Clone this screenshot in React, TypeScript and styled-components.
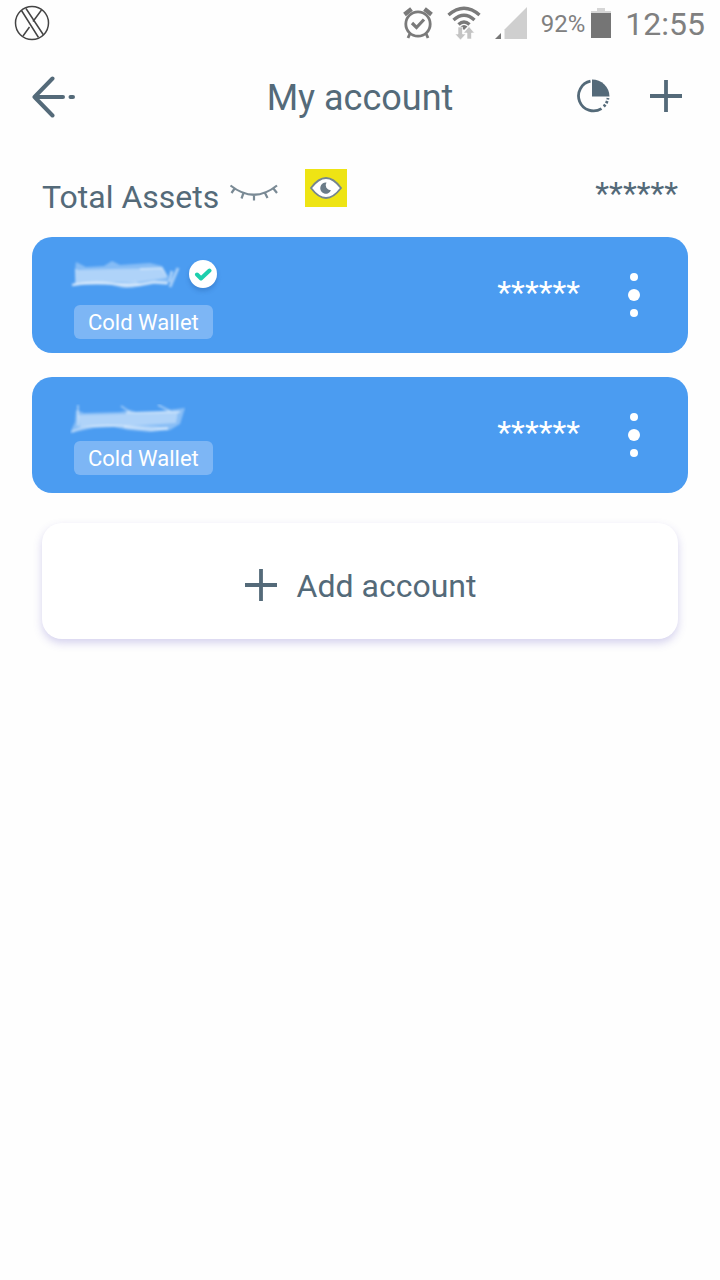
import React, { useState } from 'react';
import styled, { createGlobalStyle } from 'styled-components';

interface Account {
  id: string;
  verified: boolean;
  type: string;
  balance: string;
}

const accounts: Account[] = [
  { id: 'first', verified: true, type: 'Cold Wallet', balance: '******' },
  { id: 'second', verified: false, type: 'Cold Wallet', balance: '******' },
];

const XLogo = () => (
  <svg width="36" height="36" viewBox="0 0 36 36" fill="none" stroke="#444" strokeWidth="1.5">
    <circle cx="18" cy="18" r="16.5" />
    <path d="M7.5 5.5 L24.5 32.5 M12 3.5 L29.5 30 M27.5 5 L19 16.5 M9 31 L15.5 22" />
  </svg>
);

const AlarmIcon = () => (
  <svg width="30" height="32" viewBox="0 0 30 32" fill="none" stroke="#7a7a7a" strokeWidth="2.8">
    <circle cx="15" cy="17" r="12.2" />
    <path d="M1.5 7.5 L8.5 2 M28.5 7.5 L21.5 2" strokeWidth="4.4" />
    <path d="M9 16 L13.5 20.5 L21 12.5" strokeWidth="3.2" />
    <path d="M7 26.5 L5 31 M23 26.5 L25 31" />
  </svg>
);

const WifiIcon = () => (
  <svg width="34" height="34" viewBox="0 0 34 34" fill="none">
    <g stroke="#7a7a7a" strokeWidth="3.4">
      <path d="M1.5 9 Q17 -4.5 32.5 9" />
      <path d="M6.5 14 Q17 4.5 27.5 14" />
      <path d="M11.5 18.5 Q17 13.5 22.5 18.5" />
    </g>
    <path d="M13.5 20.5 Q17 17.5 20.5 20.5 L17 24 Z" fill="#7a7a7a" />
    <path
      d="M11 21 H15.5 V28 H19 L13.5 34 L8 28 H11 Z M20 33 V27 H16.5 L22 20.5 L27.5 27 H24.5 V33 Z"
      fill="#c4c4c4"
      stroke="#fff"
      strokeWidth="0.6"
    />
  </svg>
);

const SignalIcon = () => (
  <svg width="32" height="32" viewBox="0 0 32 32">
    <path d="M9.5 22.5 L32 0 V32 H9.5 Z" fill="#cfcfcf" />
    <path d="M0 32 L6 26 V32 Z" fill="#777" />
  </svg>
);

const BatteryIcon = () => (
  <svg width="20" height="30" viewBox="0 0 20 30">
    <path d="M6 0 H14 V3 H20 V6 H0 V3 H6 Z" fill="#d6d6d6" />
    <path d="M0 5 H20 V30 H0 Z" fill="#757575" />
  </svg>
);

const BackIcon = () => (
  <svg width="44" height="42" viewBox="0 0 44 42" fill="none" stroke="#546a79" strokeWidth="4" strokeLinecap="round" strokeLinejoin="round">
    <path d="M20.5 2.5 L2.5 21 L20.5 39.5 M2.5 21 H31 M38.5 21 H41" />
  </svg>
);

const ChartIcon = () => (
  <svg width="34" height="34" viewBox="0 0 34 34" fill="none" stroke="#546a79" strokeWidth="2.8">
    <path d="M14.5 2.2 A15 15 0 1 0 25.5 29.6" />
    <path d="M27.8 27.4 A15 15 0 0 0 32 19" strokeDasharray="2.4 1.6" />
    <path d="M16 0.5 A17.5 17 0 0 1 33.5 17.5 H16 Z" fill="#546a79" stroke="none" />
  </svg>
);

const PlusIcon = () => (
  <svg width="34" height="34" viewBox="0 0 34 34" stroke="#546a79" strokeWidth="3.8">
    <path d="M17 1 V33 M1 17 H33" />
  </svg>
);

const ClosedEyeIcon = () => (
  <svg width="50" height="20" viewBox="0 0 50 20" fill="none" stroke="#7a8a95" strokeWidth="2.2">
    <path d="M1.5 2.5 Q25 21 48 2.5 M6 5 L2.5 10 M14.5 10 L12.5 15.5 M25 12 V17.5 M36 10 L38.5 15 M44 5 L48 10" />
  </svg>
);

const OpenEyeIcon = () => (
  <svg width="32" height="22" viewBox="0 0 32 22">
    <path d="M1 11 Q16 -9 31 11 Q16 31 1 11 Z" fill="#fff" stroke="#75868f" strokeWidth="1.8" />
    <path d="M16.5 5.5 A5.6 5.6 0 1 0 21 13.2 A5 5 0 0 1 16.5 5.5 Z" fill="#6b7c88" />
  </svg>
);

const CheckIcon = () => (
  <svg width="18" height="14" viewBox="0 0 18 14" fill="none" stroke="#1dcfad" strokeWidth="4" strokeLinecap="round" strokeLinejoin="round">
    <path d="M3 7.5 L7 11.5 L15.5 3.5" />
  </svg>
);

const DotsIcon = () => (
  <svg width="12" height="44" viewBox="0 0 12 44" fill="#fff">
    <circle cx="6" cy="4" r="4" />
    <circle cx="6" cy="22" r="6" />
    <circle cx="6" cy="40" r="4" />
  </svg>
);

// Account names are smudged out
const SmudgeA = () => (
  <svg width="112" height="32" viewBox="0 0 112 32" fill="#fff" stroke="#fff">
    <defs>
      <filter id="smudgeA" x="-10%" y="-20%" width="120%" height="140%">
        <feGaussianBlur stdDeviation="1.2" />
      </filter>
    </defs>
    <g filter="url(#smudgeA)" strokeWidth="0">
      <path d="M5 10 L6 2 L16 7 L34 6 L42 1 L50 5 L80 3 L92 6 L98 17 L97 25 L84 24 L62 28 L52 28 L42 25 L10 25 L2 26 L5 22 Z" opacity="0.32" />
      <path d="M7 10 L40 9 L92 8 L96 18 L70 22 L8 23 Z" opacity="0.34" />
      <path d="M45 24 L66 21 L70 25 L56 28 Z" opacity="0.25" />
      <path d="M2 25 Q24 21 44 24 T84 22 L98 23" fill="none" strokeWidth="2.4" opacity="0.6" />
      <path d="M6 9 L7 24 M70 9 L92 8 L97 17" fill="none" strokeWidth="2" opacity="0.4" />
      <path d="M108 8 L100 27 M102 11 L99 22" fill="none" strokeWidth="3" opacity="0.5" />
    </g>
  </svg>
);

const SmudgeB = () => (
  <svg width="116" height="32" viewBox="0 0 116 32" fill="#fff" stroke="#fff">
    <defs>
      <filter id="smudgeB" x="-10%" y="-20%" width="120%" height="140%">
        <feGaussianBlur stdDeviation="1.3" />
      </filter>
    </defs>
    <g filter="url(#smudgeB)" strokeWidth="0">
      <path d="M6 6 L14 9 L50 8 L60 6 L66 8 L90 7 L98 6 L115 4 L110 20 L100 26 L80 28 L58 26 L44 23 L24 24 L0 29 L5 18 Z" opacity="0.34" />
      <path d="M8 11 L50 10 L108 8 L106 19 L60 22 L10 23 Z" opacity="0.32" />
      <path d="M2 28 Q14 20 50 22 T98 25" fill="none" strokeWidth="2.4" opacity="0.35" />
      <path d="M56 9 L110 8 M54 23 L82 26 L98 24" fill="none" strokeWidth="2" opacity="0.45" />
      <path d="M8 1 V22 M51 2 L60 8 M88 1 L100 7" fill="none" strokeWidth="2" opacity="0.4" />
    </g>
  </svg>
);

export default function App() {
  const [balancesHidden, setBalancesHidden] = useState(true);

  return (
    <>
      <GlobalStyle />
      <StatusBar>
        <XLogo />
        <StatusIcons>
          <AlarmIcon />
          <WifiIcon />
          <SignalIcon />
          <Battery>
            <BatteryText>92%</BatteryText>
            <BatteryIcon />
          </Battery>
          <Clock>12:55</Clock>
        </StatusIcons>
      </StatusBar>

      <Header>
        <IconButton aria-label="Back"><BackIcon /></IconButton>
        <Title>My account</Title>
        <HeaderActions>
          <IconButton aria-label="Statistics"><ChartIcon /></IconButton>
          <IconButton aria-label="Add"><PlusIcon /></IconButton>
        </HeaderActions>
      </Header>

      <main>
        <TotalRow>
          <TotalLabel>Total Assets</TotalLabel>
          <IconButton aria-label="Hide balances" aria-pressed={balancesHidden} onClick={() => setBalancesHidden(true)}>
            <ClosedEyeIcon />
          </IconButton>
          <EyeButton aria-label="Show balances" aria-pressed={!balancesHidden} onClick={() => setBalancesHidden(false)}>
            <OpenEyeIcon />
          </EyeButton>
          <TotalAmount>******</TotalAmount>
        </TotalRow>

        <AccountList>
          {accounts.map((account) => (
            <AccountCard key={account.id}>
              <AccountInfo>
                <NameRow $tall={account.verified}>
                  {account.verified ? <SmudgeA /> : <SmudgeB />}
                  {account.verified && <Badge><CheckIcon /></Badge>}
                </NameRow>
                <Tag>{account.type}</Tag>
              </AccountInfo>
              <Amount>{account.balance}</Amount>
              <IconButton aria-label="Account menu"><DotsIcon /></IconButton>
            </AccountCard>
          ))}
        </AccountList>

        <AddButton>
          <PlusIcon />
          <AddLabel>Add account</AddLabel>
        </AddButton>
      </main>
    </>
  );
}

const GlobalStyle = createGlobalStyle`
  * {
    box-sizing: border-box;
  }

  body {
    margin: 0;
    background: #fefefe;
    color: #546a79;
    font-family: Roboto, 'Liberation Sans', sans-serif;
  }

  button {
    font-family: inherit;
    color: inherit;
    cursor: pointer;
  }

  svg {
    display: block;
    flex-shrink: 0;
  }
`;

const StatusBar = styled.div`
  display: flex;
  align-items: center;
  justify-content: space-between;
  height: 46px;
  padding: 0 15px 0 14px;
`;

const StatusIcons = styled.div`
  display: flex;
  align-items: center;
  gap: 14px;
  color: #808080;
`;

const Battery = styled.div`
  display: flex;
  align-items: center;
  gap: 6px;
`;

const BatteryText = styled.span`
  padding-top: 2px;
  font-size: 24px;
`;

const Clock = styled.span`
  padding-top: 2px;
  font-size: 32px;
  line-height: 44px;
`;

const Header = styled.header`
  display: grid;
  grid-template-columns: 1fr auto 1fr;
  align-items: center;
  height: 102px;
  padding: 0 32px;
`;

const HeaderActions = styled.div`
  display: flex;
  justify-content: flex-end;
  gap: 39px;
  padding: 0 5px 2px 0;
`;

const Title = styled.h1`
  margin: 0;
  padding-top: 2px;
  font-size: 36px;
  font-weight: 400;
`;

const IconButton = styled.button`
  display: flex;
  justify-self: start;
  padding: 0;
  border: 0;
  background: none;
`;

const TotalRow = styled.div`
  display: flex;
  align-items: center;
  height: 89px;
  padding: 0 42px;
`;

const TotalLabel = styled.span`
  margin-right: 10px;
  padding-top: 8px;
  font-size: 32px;
`;

const EyeButton = styled.button`
  display: flex;
  align-items: center;
  justify-content: center;
  width: 42px;
  height: 38px;
  margin: 0 0 10px 26px;
  padding: 0;
  border: 0;
  background: #eee414;
`;

const TotalAmount = styled.span`
  margin-left: auto;
  font-size: 32px;
`;

const AccountList = styled.div`
  display: flex;
  flex-direction: column;
  gap: 24px;
  padding: 0 32px;
`;

const AccountCard = styled.section`
  display: flex;
  align-items: center;
  height: 116px;
  padding: 0 48px 0 42px;
  border-radius: 20px;
  background: #4b9cf1;
  color: #fff;
`;

const AccountInfo = styled.div`
  display: flex;
  flex-direction: column;
  align-items: flex-start;
  gap: 9px;
  padding-top: 9px;
`;

const NameRow = styled.div<{ $tall: boolean }>`
  display: flex;
  align-items: flex-start;
  gap: 7px;
  height: ${({ $tall }) => ($tall ? '36px' : '28px')};
  margin-left: -4px;
`;

const Badge = styled.span`
  display: flex;
  align-items: center;
  justify-content: center;
  width: 28px;
  height: 28px;
  border-radius: 50%;
  background: #fff;
  box-shadow: 0 3px 4px rgba(30, 80, 150, 0.3);
`;

const Tag = styled.span`
  padding: 2px 14px 0;
  border-radius: 6px;
  background: #7db6f5;
  font-size: 22px;
  line-height: 32px;
`;

const Amount = styled.span`
  margin: 0 48px 0 auto;
  padding-bottom: 6px;
  font-size: 32px;
`;

const AddButton = styled.button`
  display: flex;
  align-items: center;
  justify-content: center;
  gap: 19px;
  width: calc(100% - 84px);
  height: 116px;
  margin: 30px 42px;
  padding: 8px 0 0;
  border: 0;
  border-radius: 20px;
  background: #fff;
  box-shadow: 0 4px 8px rgba(90, 80, 190, 0.25);
  font-size: 32px;
`;

const AddLabel = styled.span`
  padding-top: 2px;
`;
